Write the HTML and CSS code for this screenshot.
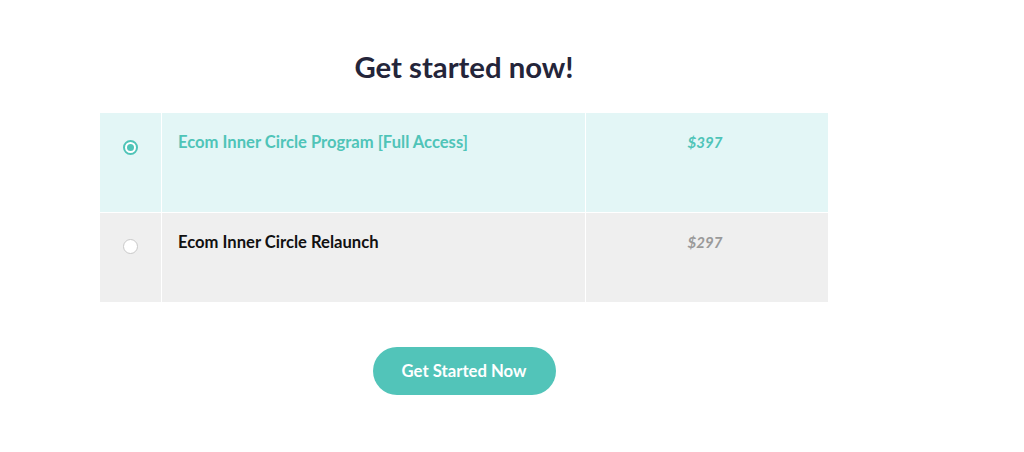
FILE: index.html
```html
<!DOCTYPE html>
<html lang="en">
<head>
<meta charset="utf-8">
<title>Get started now!</title>
<link rel="stylesheet" href="styles.css">
</head>
<body>
<main class="wrap">
  <h1 class="title">Get started now!</h1>
  <div class="options">
    <div class="row row-selected">
      <div class="cell cell-radio"><span class="radio radio-on"></span></div>
      <div class="cell cell-name">Ecom Inner Circle Program [Full Access]</div>
      <div class="cell cell-price">$397</div>
    </div>
    <div class="row row-plain">
      <div class="cell cell-radio"><span class="radio"></span></div>
      <div class="cell cell-name">Ecom Inner Circle Relaunch</div>
      <div class="cell cell-price">$297</div>
    </div>
  </div>
  <div class="actions">
    <button class="cta" type="button">Get Started Now</button>
  </div>
</main>
</body>
</html>
```
FILE: styles.css
```css
* { box-sizing: border-box; }
html, body { margin: 0; padding: 0; background: #fff; }
body { font-family: Lato, "Open Sans", Arial, sans-serif; }

.wrap {
  width: 728px;
  margin-left: 100px;
  padding-top: 50px;
}

.title {
  margin: 0 0 29px;
  font-size: 29.3px;
  line-height: 34px;
  font-weight: 700;
  color: #24253a;
  text-align: center;
}

.options {
  display: flex;
  flex-direction: column;
  gap: 1px;
  background: #fff;
}

.row {
  display: grid;
  grid-template-columns: 61px 423px 242px;
  column-gap: 1px;
}
.row-selected { height: 99px; }
.row-plain { height: 89px; }

.cell {
  padding-top: 17px;
  font-size: 16.6px;
  line-height: 24px;
  font-weight: 700;
}
.row-selected .cell { background: #e3f6f6; }
.row-plain .cell { background: #efefef; }

.cell-radio {
  display: flex;
  justify-content: center;
  padding-top: 27px;
}
.row-plain .cell-radio { padding-top: 26px; }

.radio {
  width: 15px;
  height: 15px;
  border-radius: 50%;
  background: #fff;
  border: 1px solid #c9c9c9;
  display: flex;
  align-items: center;
  justify-content: center;
}
.radio-on {
  border: 2px solid #4fc4b8;
  background: #fff;
}
.radio-on::after {
  content: "";
  width: 7px;
  height: 7px;
  border-radius: 50%;
  background: #4fc4b8;
}

.cell-name {
  padding-left: 16px;
  color: #111;
}
.row-selected .cell-name { color: #4fc4b8; }

.cell-price {
  text-align: center;
  font-style: italic;
  font-size: 15px;
  padding-right: 4px;
  color: #9a9a9a;
}
.row-selected .cell-price { color: #4fc4b8; }

.actions {
  display: flex;
  justify-content: center;
  padding-top: 45px;
}

.cta {
  width: 183px;
  height: 48px;
  border: 0;
  border-radius: 24px;
  background: #52c4b9;
  color: #fff;
  font-family: Lato, "Open Sans", Arial, sans-serif;
  font-size: 16.7px;
  font-weight: 700;
  cursor: pointer;
}
```
